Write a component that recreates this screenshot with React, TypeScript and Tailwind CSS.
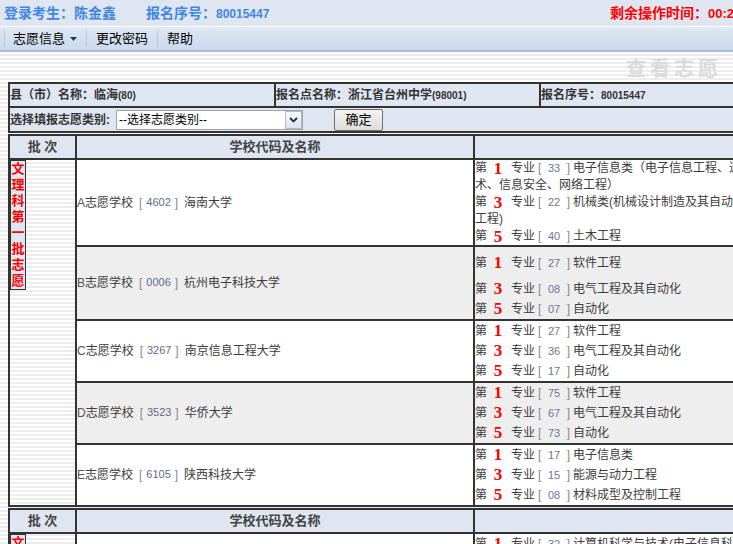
import React from 'react';

interface Major {
  rank: number;
  code: string;
  name: React.ReactNode;
}

interface School {
  tag: string;
  code: string;
  name: string;
  bg: string;
  cellClass: string;
  firstGap?: boolean;
  majors: Major[];
}

const schools: School[] = [
  {
    tag: 'A',
    code: '4602',
    name: '海南大学',
    bg: 'bg-white',
    cellClass: 'leading-[17px]',
    majors: [
      {
        rank: 1,
        code: '33',
        name: (
          <>
            电子信息类（电子信息工程、通信工程、电子科学与技
            <br />
            术、信息安全、网络工程）
          </>
        ),
      },
      {
        rank: 3,
        code: '22',
        name: (
          <>
            机械类(机械设计制造及其自动化、材料成型及控制
            <br />
            工程)
          </>
        ),
      },
      { rank: 5, code: '40', name: '土木工程' },
    ],
  },
  {
    tag: 'B',
    code: '0006',
    name: '杭州电子科技大学',
    bg: 'bg-[#eeeeee]',
    cellClass: 'leading-[20px] pt-[6px]',
    firstGap: true,
    majors: [
      { rank: 1, code: '27', name: '软件工程' },
      { rank: 3, code: '08', name: '电气工程及其自动化' },
      { rank: 5, code: '07', name: '自动化' },
    ],
  },
  {
    tag: 'C',
    code: '3267',
    name: '南京信息工程大学',
    bg: 'bg-white',
    cellClass: 'leading-[20px]',
    majors: [
      { rank: 1, code: '27', name: '软件工程' },
      { rank: 3, code: '36', name: '电气工程及其自动化' },
      { rank: 5, code: '17', name: '自动化' },
    ],
  },
  {
    tag: 'D',
    code: '3523',
    name: '华侨大学',
    bg: 'bg-[#eeeeee]',
    cellClass: 'leading-[20px]',
    majors: [
      { rank: 1, code: '75', name: '软件工程' },
      { rank: 3, code: '67', name: '电气工程及其自动化' },
      { rank: 5, code: '73', name: '自动化' },
    ],
  },
  {
    tag: 'E',
    code: '6105',
    name: '陕西科技大学',
    bg: 'bg-white',
    cellClass: 'leading-[20px]',
    majors: [
      { rank: 1, code: '17', name: '电子信息类' },
      { rank: 3, code: '15', name: '能源与动力工程' },
      { rank: 5, code: '08', name: '材料成型及控制工程' },
    ],
  },
];

const cell = 'border border-[#333] p-0';

const MajorLine = ({ m, gap }: { m: Major; gap?: boolean }) => (
  <div className={`whitespace-nowrap ${gap ? 'mb-[6px]' : ''}`}>
    <span>第</span>
    <span className="inline-block align-top w-[22px] text-center text-[17px] font-bold text-[#ff0000] font-['Liberation_Serif',serif]">
      {m.rank}
    </span>
    <span className="ml-[2px]">专业</span>
    <span className="inline-flex w-[38px] justify-between px-[3px] text-[#888]">
      <span>[</span>
      <span className="text-[11px] text-[#6b7694]">{m.code}</span>
      <span>]</span>
    </span>
    <span>{m.name}</span>
  </div>
);

const RedLabel = ({ text }: { text: string }) => (
  <div className="w-[16px] border border-[#333] bg-[#dfe6f1] text-center text-[13px] leading-[16px] font-bold text-[#ff0000]">
    {text.split('').map((c, i) => (
      <div key={i}>{c}</div>
    ))}
  </div>
);

const HeaderRow = () => (
  <tr className="h-[24px] bg-[#dfe6f1] text-[13px] font-bold text-[#444]">
    <td className={`${cell} w-[67px] text-center`}>批 次</td>
    <td className={`${cell} w-[398px] text-center`}>学校代码及名称</td>
    <td className={cell}></td>
  </tr>
);

export default function App() {
  return (
    <div className="w-[733px] h-[544px] overflow-hidden bg-[repeating-linear-gradient(to_bottom,#ffffff_0px,#ffffff_2px,#ededed_2px,#ededed_4px)] font-['Liberation_Sans','Noto_Sans_CJK_SC',sans-serif] text-[12px] text-[#3c3c3c]">
      {/* top bar */}
      <div className="w-[764px] h-[26px] bg-[#dfe6f2] flex items-center justify-between px-[4px] font-bold text-[14px]">
        <div className="flex items-center text-[#3e86e6]">
          <span>登录考生：陈金鑫</span>
          <span className="ml-[30px]">报名序号：<span className="text-[12px]">80015447</span></span>
        </div>
        <span className="text-[#ff0000]">
          剩余操作时间：<span className="text-[13px]">00:21:36</span>
        </span>
      </div>
      <div className="h-px bg-white" />
      {/* menu */}
      <div className="h-[25px] bg-gradient-to-b from-[#dfe8f4] to-[#cad9ec] border-b-2 border-[#a9c1dc] flex items-center pl-[4px] text-[13px] text-black">
        <span className="w-px h-[17px] bg-[#b5c7df]" />
        <span className="pl-[8px] pr-[9px] flex items-center">
          志愿信息
          <svg width="7" height="4" viewBox="0 0 7 4" className="ml-[5px]">
            <path d="M0 0h7L3.5 4z" fill="#1f3a5f" />
          </svg>
        </span>
        <span className="w-px h-[17px] bg-[#b5c7df]" />
        <span className="px-[9px]">更改密码</span>
        <span className="w-px h-[17px] bg-[#b5c7df]" />
        <span className="px-[9px]">帮助</span>
      </div>
      {/* watermark */}
      <div className="w-[733px] h-[30px] flex items-center justify-end pr-[11px] pt-[4px]">
        <span className="text-[20px] font-bold tracking-[4px] text-[#dadada] font-['Liberation_Serif','Noto_Sans_CJK_SC',serif]">
          查看志愿
        </span>
      </div>

      {/* info table */}
      <table className="ml-[8px] w-[870px] table-fixed border-separate border-spacing-0 border border-[#333] bg-[#dfe6f1] font-bold text-[12px] text-[#333]">
        <tbody>
          <tr className="h-[24px]">
            <td className={`${cell} w-[266px]`}>
              县（市）名称：临海<span className="text-[10px]">(80)</span>
            </td>
            <td className={`${cell} w-[265px]`}>
              报名点名称：浙江省台州中学<span className="text-[10px]">(98001)</span>
            </td>
            <td className={cell}>
              报名序号：<span className="text-[10px]">80015447</span>
            </td>
          </tr>
          <tr className="h-[25px]">
            <td className={cell} colSpan={3}>
              <div className="flex items-center">
                <span className="w-[106px]">选择填报志愿类别:</span>
                <div className="w-[187px] h-[20px] border border-[#9aa4b0] bg-white flex items-center justify-between font-normal text-black text-[12px]">
                  <span className="pl-[2px]">--选择志愿类别--</span>
                  <span className="w-[17px] h-[18px] border border-[#b4bcc7] bg-gradient-to-b from-[#f8f9fb] to-[#dfe4ea] flex items-center justify-center">
                    <svg width="9" height="6" viewBox="0 0 9 6">
                      <path d="M1 1l3.5 3.5L8 1" stroke="#1b2f57" strokeWidth="1.8" fill="none" />
                    </svg>
                  </span>
                </div>
                <button className="ml-[31px] w-[49px] h-[22px] border border-[#707070] rounded-[2px] bg-gradient-to-b from-[#f4f4f4] to-[#dcdcdc] font-normal text-[13px] text-black">
                  确定
                </button>
              </div>
            </td>
          </tr>
        </tbody>
      </table>

      {/* first group */}
      <table className="ml-[8px] mt-px w-[870px] table-fixed border-separate border-spacing-0 border border-[#333]">
        <tbody>
          <HeaderRow />
          {schools.map((s, i) => (
            <tr key={s.tag}>
              {i === 0 && (
                <td className={`${cell} align-top`} rowSpan={schools.length}>
                  <RedLabel text="文理科第一批志愿" />
                </td>
              )}
              <td className={`${cell} ${s.bg} align-middle`}>
                <span className="text-[#555]">{s.tag}</span>志愿学校
                <span className="inline-flex w-[51px] justify-between px-[6px] text-[#888]">
                  <span>[</span>
                  <span className="text-[11px] text-[#5b6b8e]">{s.code}</span>
                  <span>]</span>
                </span>
                {s.name}
              </td>
              <td className={`${cell} ${s.bg} align-top ${s.cellClass}`}>
                {s.majors.map((m, j) => (
                  <MajorLine key={j} m={m} gap={s.firstGap && j === 0} />
                ))}
              </td>
            </tr>
          ))}
        </tbody>
      </table>

      {/* second group */}
      <table className="ml-[8px] mt-px w-[870px] table-fixed border-separate border-spacing-0 border border-[#333]">
        <tbody>
          <HeaderRow />
          <tr>
            <td className={`${cell} align-top`}>
              <RedLabel text="文理科第二批志愿" />
            </td>
            <td className={`${cell} bg-white align-middle`}>
              <span className="text-[#555]">A</span>志愿学校
            </td>
            <td className={`${cell} bg-white align-top leading-[20px]`}>
              <MajorLine m={{ rank: 1, code: '32', name: '计算机科学与技术(电子信息科学与技术)' }} />
              <MajorLine m={{ rank: 3, code: '18', name: '电气工程及其自动化' }} />
              <MajorLine m={{ rank: 5, code: '05', name: '自动化' }} />
            </td>
          </tr>
        </tbody>
      </table>
    </div>
  );
}
